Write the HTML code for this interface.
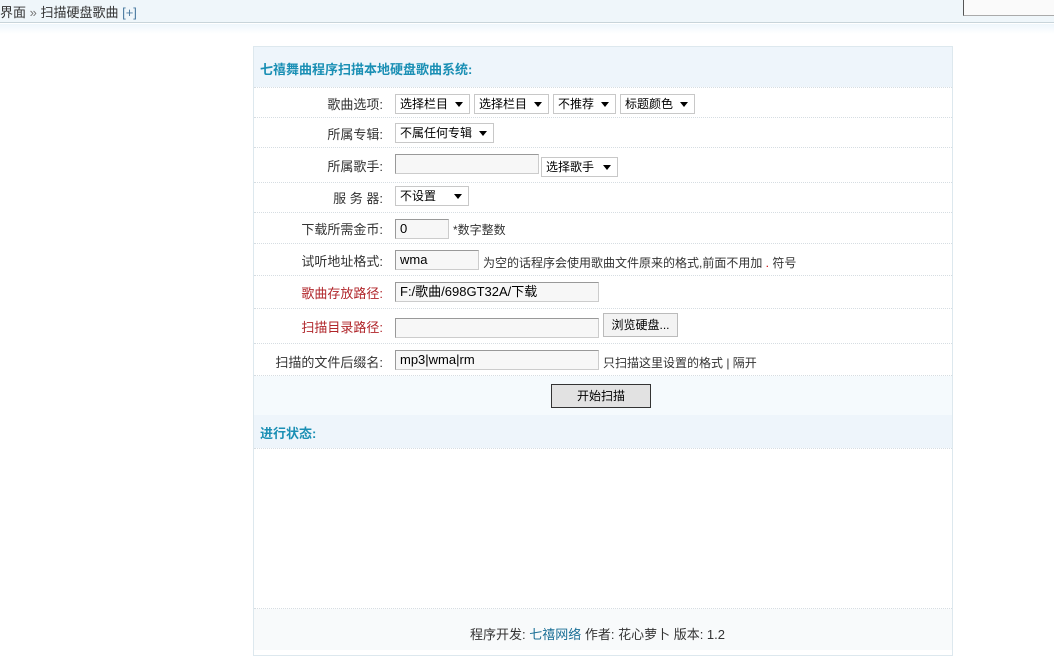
<!DOCTYPE html>
<html><head><meta charset="utf-8"><style>
*{margin:0;padding:0;box-sizing:border-box}
body{width:1054px;height:650px;position:relative;overflow:hidden;background:#fff;font:13px "Liberation Sans","Noto Sans CJK SC",sans-serif;color:#333}
.a{position:absolute}
.top{left:0;top:0;width:1054px;height:23px;background:#eff6fa;border-bottom:1px solid #c8d4da}
.shade{left:0;top:24px;width:1054px;height:10px;background:linear-gradient(#eef6fc,#fff)}
.box{left:253px;top:46px;width:700px;height:610px;border:1px solid #dde8ee;background:#fff}
.hd{background:#eef5fb;color:#1a8fb4;font-weight:bold;font-size:13px}
.ln{height:0;border-top:1px dotted #d6dde2;left:254px;width:698px}
.lb{width:130px;left:253px;text-align:right;font-size:13px;color:#333}
.red{color:#b0252a}
.sel{border:1px solid #c8c8c8;background:#fff;height:20px;line-height:18px;padding-left:4px;font-size:12px;color:#000}
.sel:after{content:"";position:absolute;right:6px;top:7px;border-left:4px solid transparent;border-right:4px solid transparent;border-top:5px solid #000}
.in{border:1px solid #999;border-right-color:#ccc;border-bottom-color:#ccc;background:#f7f7f7;height:20px;line-height:18px;padding-left:4px;font-size:13px;color:#000}
.btn{border:1px solid #999;background:#f3f3f3;text-align:center;line-height:22px;color:#000;font-size:12px}
</style></head><body>
<div class="a top"></div>
<div class="a" style="left:0;top:2px;font-size:13px;color:#333">界面 <span style="color:#777">»</span> 扫描硬盘歌曲 <span style="color:#4a7aa0">[+]</span></div>
<div class="a" style="left:963px;top:0;width:91px;height:16px;background:#fafafa;border-left:1px solid #555;border-bottom:1px solid #aaa"></div>
<div class="a shade"></div>
<div class="a box"></div>
<div class="a hd" style="left:254px;top:47px;width:698px;height:40px;padding:12px 0 0 6px">七禧舞曲程序扫描本地硬盘歌曲系统:</div>
<div class="a ln" style="top:87px"></div>
<div class="a ln" style="top:117px"></div>
<div class="a ln" style="top:147px"></div>
<div class="a ln" style="top:182px"></div>
<div class="a ln" style="top:212px"></div>
<div class="a ln" style="top:243px"></div>
<div class="a ln" style="top:275px"></div>
<div class="a ln" style="top:308px"></div>
<div class="a ln" style="top:343px"></div>
<div class="a ln" style="top:375px"></div>

<div class="a lb" style="top:94px">歌曲选项:</div>
<div class="a sel" style="left:395px;top:94px;width:75px">选择栏目</div>
<div class="a sel" style="left:474px;top:94px;width:75px">选择栏目</div>
<div class="a sel" style="left:553px;top:94px;width:63px">不推荐</div>
<div class="a sel" style="left:620px;top:94px;width:75px">标题颜色</div>

<div class="a lb" style="top:124px">所属专辑:</div>
<div class="a sel" style="left:395px;top:123px;width:99px">不属任何专辑</div>

<div class="a lb" style="top:156px">所属歌手:</div>
<div class="a in" style="left:395px;top:154px;width:144px"></div>
<div class="a sel" style="left:541px;top:157px;width:77px">选择歌手</div>

<div class="a lb" style="top:188px">服 务 器:</div>
<div class="a sel" style="left:395px;top:186px;width:74px">不设置</div>

<div class="a lb" style="top:219px">下载所需金币:</div>
<div class="a in" style="left:395px;top:219px;width:54px">0</div>
<div class="a" style="left:453px;top:221px;font-size:12px">*数字整数</div>

<div class="a lb" style="top:251px">试听地址格式:</div>
<div class="a in" style="left:395px;top:250px;width:84px">wma</div>
<div class="a" style="left:483px;top:254px;font-size:12px">为空的话程序会使用歌曲文件原来的格式,前面不用加 <span style="color:#c00">.</span> 符号</div>

<div class="a lb red" style="top:283px">歌曲存放路径:</div>
<div class="a in" style="left:395px;top:282px;width:204px">F:/歌曲/698GT32A/下载</div>

<div class="a lb red" style="top:317px">扫描目录路径:</div>
<div class="a in" style="left:395px;top:318px;width:204px"></div>
<div class="a btn" style="left:603px;top:313px;width:75px;height:24px;border-color:#bbb">浏览硬盘...</div>

<div class="a lb" style="top:352px">扫描的文件后缀名:</div>
<div class="a in" style="left:395px;top:350px;width:204px">mp3|wma|rm</div>
<div class="a" style="left:603px;top:354px;font-size:12px">只扫描这里设置的格式 | 隔开</div>

<div class="a" style="left:254px;top:376px;width:698px;height:39px;background:#f5fafd"></div>
<div class="a btn" style="left:551px;top:384px;width:100px;height:24px;border:1px solid #333;background:#e2e2e2">开始扫描</div>

<div class="a hd" style="left:254px;top:415px;width:698px;height:33px;padding:8px 0 0 6px">进行状态:</div>
<div class="a ln" style="top:448px"></div>
<div class="a ln" style="top:608px"></div>
<div class="a" style="left:254px;top:609px;width:698px;height:41px;background:#f8fafb"></div>
<div class="a" style="left:470px;top:624px">程序开发: <span style="color:#1a6f96">七禧网络</span> 作者: 花心萝卜 版本: 1.2</div>
</body></html>
